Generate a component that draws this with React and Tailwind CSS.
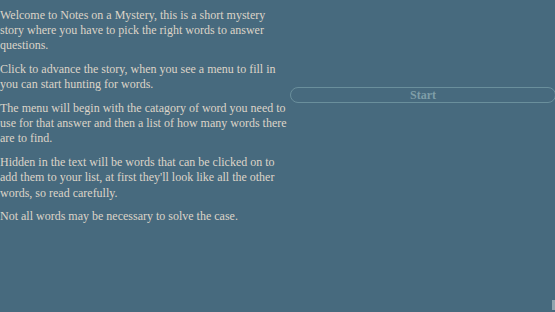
export default function App() {
  const paras = [
    [
      "Welcome to Notes on a Mystery, this is a short mystery",
      "story where you have to pick the right words to answer",
      "questions.",
    ],
    [
      "Click to advance the story, when you see a menu to fill in",
      "you can start hunting for words.",
    ],
    [
      "The menu will begin with the catagory of word you need to",
      "use for that answer and then a list of how many words there",
      "are to find.",
    ],
    [
      "Hidden in the text will be words that can be clicked on to",
      "add them to your list, at first they'll look like all the other",
      "words, so read carefully.",
    ],
    ["Not all words may be necessary to solve the case."],
  ];

  return (
    <div className="w-[555px] h-[312px] overflow-hidden bg-[#476a7e] flex font-['Liberation_Serif',serif] relative">
      {/* Intro text */}
      <div className="w-[280px] shrink-0 pt-[8px] flex flex-col gap-[8.5px] text-[12px] leading-[15.2px] text-[#ddd4c8] whitespace-nowrap">
        {paras.map((lines, i) => (
          <p key={i}>
            {lines.map((l, j) => (
              <span key={j} className="block">
                {l}
              </span>
            ))}
          </p>
        ))}
      </div>

      {/* Start button */}
      <div className="flex-1 pl-[10px] pt-[87px] flex flex-col items-start">
        <button className="block w-[266px] h-[16px] rounded-full border border-[#6a8f9c] text-[#7f9ea8] font-bold text-[12px] leading-none">
          Start
        </button>
      </div>

      <div className="absolute right-0 bottom-[2px] w-[3px] h-[10px] bg-[#8fa4ae]"></div>
    </div>
  );
}
